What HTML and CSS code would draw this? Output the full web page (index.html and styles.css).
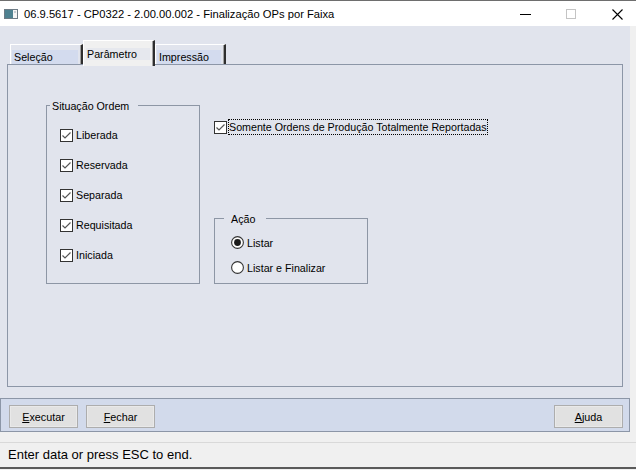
FILE: index.html
```html
<!DOCTYPE html>
<html lang="pt">
<head>
<meta charset="utf-8">
<title>Finalização OPs por Faixa</title>
<link rel="stylesheet" href="styles.css">
</head>
<body>
<div class="window">
  <div class="titlebar">
    <svg class="app-icon" width="14" height="10" viewBox="0 0 14 10">
      <rect x="0.5" y="0.5" width="13" height="9" fill="#f4f4f4" stroke="#6d7b85"/>
      <rect x="1" y="1" width="8" height="8" fill="#4e8190"/>
      <rect x="10" y="2" width="2" height="2" fill="#c7ccd1"/>
    </svg>
    <span class="title">06.9.5617 - CP0322 - 2.00.00.002 - Finalização OPs por Faixa</span>
    <div class="controls">
      <svg width="11" height="11" viewBox="0 0 11 11"><line x1="0" y1="5.5" x2="11" y2="5.5" stroke="#000" stroke-width="1"/></svg>
      <svg width="11" height="11" viewBox="0 0 11 11"><rect x="0.5" y="0.5" width="9" height="9" fill="none" stroke="#c4c4c4"/></svg>
      <svg width="11" height="11" viewBox="0 0 11 11"><path d="M0.5 0.5 L10.5 10.5 M10.5 0.5 L0.5 10.5" stroke="#000" stroke-width="1.1"/></svg>
    </div>
  </div>

  <div class="client">
    <div class="tabs">
      <div class="tab"><span class="tab-label w66">Seleção</span></div>
      <div class="tab active"><span class="tab-label w64">Parâmetro</span></div>
      <div class="tab"><span class="tab-label w64">Impressão</span></div>
    </div>
    <div class="panel">
      <div class="group situacao">
        <span class="legend legend-situacao">Situação Ordem</span>
        <div class="row check-row">
          <svg class="box" width="13" height="13" viewBox="0 0 13 13"><rect x="0.5" y="0.5" width="12" height="12" fill="#fff" stroke="#333"/><polyline points="2.5,6.5 5,9 10.5,3.5" fill="none" stroke="#555" stroke-width="1.2"/></svg>
          <span class="label">Liberada</span>
        </div>
        <div class="row check-row">
          <svg class="box" width="13" height="13" viewBox="0 0 13 13"><rect x="0.5" y="0.5" width="12" height="12" fill="#fff" stroke="#333"/><polyline points="2.5,6.5 5,9 10.5,3.5" fill="none" stroke="#555" stroke-width="1.2"/></svg>
          <span class="label">Reservada</span>
        </div>
        <div class="row check-row">
          <svg class="box" width="13" height="13" viewBox="0 0 13 13"><rect x="0.5" y="0.5" width="12" height="12" fill="#fff" stroke="#333"/><polyline points="2.5,6.5 5,9 10.5,3.5" fill="none" stroke="#555" stroke-width="1.2"/></svg>
          <span class="label">Separada</span>
        </div>
        <div class="row check-row">
          <svg class="box" width="13" height="13" viewBox="0 0 13 13"><rect x="0.5" y="0.5" width="12" height="12" fill="#fff" stroke="#333"/><polyline points="2.5,6.5 5,9 10.5,3.5" fill="none" stroke="#555" stroke-width="1.2"/></svg>
          <span class="label">Requisitada</span>
        </div>
        <div class="row check-row">
          <svg class="box" width="13" height="13" viewBox="0 0 13 13"><rect x="0.5" y="0.5" width="12" height="12" fill="#fff" stroke="#333"/><polyline points="2.5,6.5 5,9 10.5,3.5" fill="none" stroke="#555" stroke-width="1.2"/></svg>
          <span class="label">Iniciada</span>
        </div>
      </div>

      <div class="right-col">
        <div class="row somente-row">
          <svg class="box" width="13" height="13" viewBox="0 0 13 13"><rect x="0.5" y="0.5" width="12" height="12" fill="#fff" stroke="#333"/><polyline points="2.5,6.5 5,9 10.5,3.5" fill="none" stroke="#555" stroke-width="1.2"/></svg>
          <span class="label focus">Somente Ordens de Produção Totalmente Reportadas</span>
        </div>
        <div class="group acao">
          <span class="legend legend-acao">Ação</span>
          <div class="row radio-row">
            <svg class="box" width="13" height="13" viewBox="0 0 13 13"><circle cx="6.5" cy="6.5" r="5.9" fill="#fff" stroke="#333" stroke-width="1.1"/><circle cx="6.5" cy="6.5" r="3.4" fill="#1a1a1a"/></svg>
            <span class="label">Listar</span>
          </div>
          <div class="row radio-row">
            <svg class="box" width="13" height="13" viewBox="0 0 13 13"><circle cx="6.5" cy="6.5" r="5.9" fill="#fff" stroke="#333" stroke-width="1.1"/></svg>
            <span class="label">Listar e Finalizar</span>
          </div>
        </div>
      </div>
    </div>
  </div>

  <div class="buttonbar">
    <button class="btn"><u>E</u>xecutar</button>
    <button class="btn"><u>F</u>echar</button>
    <button class="btn btn-right"><u>A</u>juda</button>
  </div>
  <div class="gap"></div>
  <div class="statusbar">Enter data or press ESC to end.</div>
</div>
</body>
</html>
```

FILE: styles.css
```css
* { box-sizing: border-box; }

html, body {
  margin: 0;
  padding: 0;
}

body {
  width: 636px;
  height: 470px;
  overflow: hidden;
  background: #f0f0f0;
  font-family: "Liberation Sans", Arial, sans-serif;
  color: #000;
}

.window {
  width: 636px;
  height: 470px;
  display: flex;
  flex-direction: column;
}

/* Title bar */
.titlebar {
  height: 26px;
  flex: none;
  background: #fff;
  border-top: 1px solid #6e6e6e;
  display: flex;
  align-items: center;
  padding-left: 4px;
}

.app-icon {
  flex: none;
  margin-top: 1px;
}

.title {
  margin-left: 6px;
  font-size: 11.2px;
  line-height: 14px;
  white-space: nowrap;
}

.controls {
  margin-left: auto;
  padding-right: 13px;
  display: flex;
  align-items: center;
  gap: 35px;
  margin-top: 1px;
}

.controls svg { display: block; }

/* Client */
.client {
  width: 630px;
  height: 372px;
  flex: none;
  background: #e1e4ed;
  padding-top: 14px;
  font-size: 10.7px;
}

.tabs {
  height: 24px;
  margin-left: 10px;
  display: flex;
  align-items: flex-end;
}

.tab {
  height: 20px;
  border-top: 1px solid #fff;
  border-left: 1px solid #fff;
  border-right: 2px solid #2e2e2e;
  box-shadow: inset -1px 0 0 #a0a0a0;
  padding: 5px 3px 0 1px;
  line-height: 14px;
  position: relative;
}

.tab-label {
  display: block;
  height: 14px;
  padding-left: 2px;
  background: #d3dbee;
  white-space: nowrap;
}

.w66 { width: 66px; }
.w64 { width: 64px; }

.tab.active {
  height: 26px;
  margin-bottom: -2px;
  background: #f0f0f0;
  padding: 7px 3px 0 2px;
  z-index: 1;
}

.tab.active .tab-label {
  height: 12px;
  line-height: 12px;
  padding-left: 1px;
  background: #e6e8ee;
}

.panel {
  margin-left: 7px;
  width: 616px;
  height: 323px;
  border: 1px solid #8c96a7;
  display: flex;
  align-items: flex-start;
  padding-left: 38px;
  gap: 14px;
}

/* Groups */
.group {
  position: relative;
  width: 154px;
  border: 1px solid #8d96a5;
}

.legend {
  position: absolute;
  top: -6px;
  line-height: 13px;
  background: #e1e4ed;
  white-space: nowrap;
}

.legend-situacao {
  left: 3px;
  padding: 0 9px 0 2px;
}

.legend-acao {
  left: 9px;
  padding: 0 11px 0 7px;
}

.situacao {
  margin-top: 40px;
  padding: 14px 0 13px 13px;
}

.row {
  display: flex;
  align-items: center;
  white-space: nowrap;
}

.row .box {
  flex: none;
  display: block;
}

.check-row {
  height: 30px;
}

.check-row .label {
  margin-left: 3px;
}

.right-col {
  display: flex;
  flex-direction: column;
}

.somente-row {
  margin-top: 54px;
  height: 16px;
}

.focus {
  margin-left: 1px;
  padding: 1px 0 1px 0;
  line-height: 12px;
  border: 1px dotted #000;
}

.acao {
  margin-top: 83px;
  padding: 11px 0 3px 16px;
}

.radio-row {
  height: 25px;
}

.radio-row .label {
  margin-left: 3px;
}

/* Button bar */
.buttonbar {
  width: 630px;
  height: 34px;
  flex: none;
  background: #d2daeb;
  border: 1px solid #8c96a7;
  display: flex;
  align-items: flex-start;
  padding: 6px 6px 0 8px;
  gap: 8px;
}

.btn {
  width: 69px;
  height: 23px;
  margin: 0;
  padding: 0;
  background: #e1e1e1;
  border: 1px solid #adadad;
  font-family: "Liberation Sans", Arial, sans-serif;
  font-size: 10.8px;
  color: #000;
  box-shadow: inset 0 0 0 1px #e9e9e9;
}

.btn u {
  text-decoration-thickness: 1px;
}

.btn-right {
  margin-left: auto;
}

.gap {
  height: 11px;
  flex: none;
  border-bottom: 1px solid #d9d9d9;
}

.statusbar {
  height: 24px;
  flex: none;
  padding-left: 8px;
  font-size: 13px;
  line-height: 24px;
  color: #000;
  border-bottom: 2px solid #5a5a5a;
  box-sizing: content-box;
}
```
